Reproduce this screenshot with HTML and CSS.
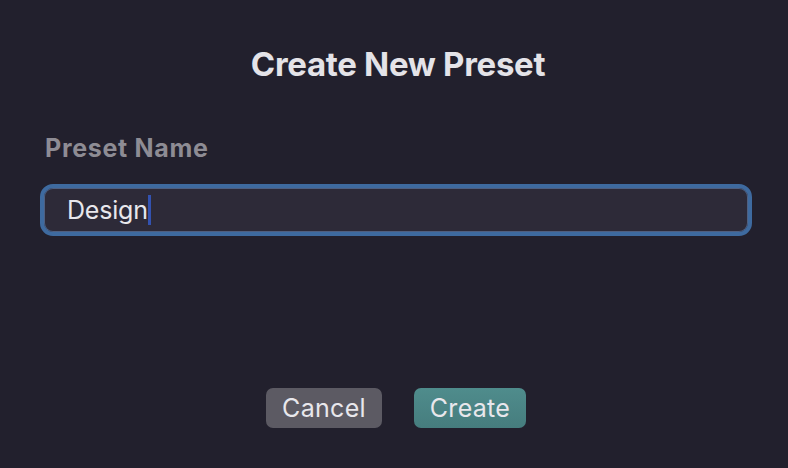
FILE: index.html
```html
<!DOCTYPE html>
<html>
<head>
<meta charset="utf-8">
<link rel="stylesheet" href="styles.css">
</head>
<body>
<div class="dialog">
  <h1 class="title">Create New Preset</h1>
  <label class="label">Preset Name</label>
  <div class="field">
    <span class="value">Design</span><span class="caret"></span>
  </div>
  <div class="spacer"></div>
  <div class="actions">
    <button class="btn btn-cancel">Cancel</button>
    <button class="btn btn-create">Create</button>
  </div>
</div>
</body>
</html>
```
FILE: styles.css
```css
html, body {
  margin: 0;
  padding: 0;
  width: 788px;
  height: 468px;
  background: #22202d;
  overflow: hidden;
}
.dialog {
  box-sizing: border-box;
  width: 788px;
  height: 468px;
  display: flex;
  flex-direction: column;
  padding: 44px 36px 40px 40px;
  font-family: Inter, "Open Sans", sans-serif;
  color: #e4e3e8;
}
.title {
  margin: 0;
  text-align: center;
  font-size: 33px;
  font-weight: 700;
  line-height: 40px;
  padding-left: 4px;
  letter-spacing: -0.3px;
}
.label {
  margin-top: 49px;
  margin-left: 5px;
  font-size: 25px;
  font-weight: 700;
  line-height: 30px;
  letter-spacing: 0.7px;
  color: #8e8c94;
}
.field {
  margin-top: 21px;
  box-sizing: border-box;
  height: 52px;
  border: 4px solid #3e6a9f;
  border-radius: 13px;
  background: #2d2a38;
  box-shadow: inset 0 0 0 1px #4f5f80;
  display: flex;
  align-items: center;
  padding-left: 23px;
}
.value {
  font-size: 25px;
  line-height: 30px;
  letter-spacing: -0.2px;
  color: #e8e7ec;
}
.caret {
  display: inline-block;
  width: 3px;
  height: 30px;
  background: #3352b0;
  margin-left: 0;
}
.spacer {
  flex: 1;
}
.actions {
  display: flex;
  justify-content: center;
  gap: 32px;
}
.btn {
  font-family: Inter, "Open Sans", sans-serif;
  font-size: 25px;
  letter-spacing: 0.3px;
  color: #e8e7ec;
  border: none;
  height: 40px;
  border-radius: 7px;
  padding: 0;
  line-height: 40px;
}
.btn-cancel {
  background: #5c5a63;
  width: 116px;
}
.btn-create {
  background: linear-gradient(#4f8c8c, #467d7e);
  width: 112px;
}
```
